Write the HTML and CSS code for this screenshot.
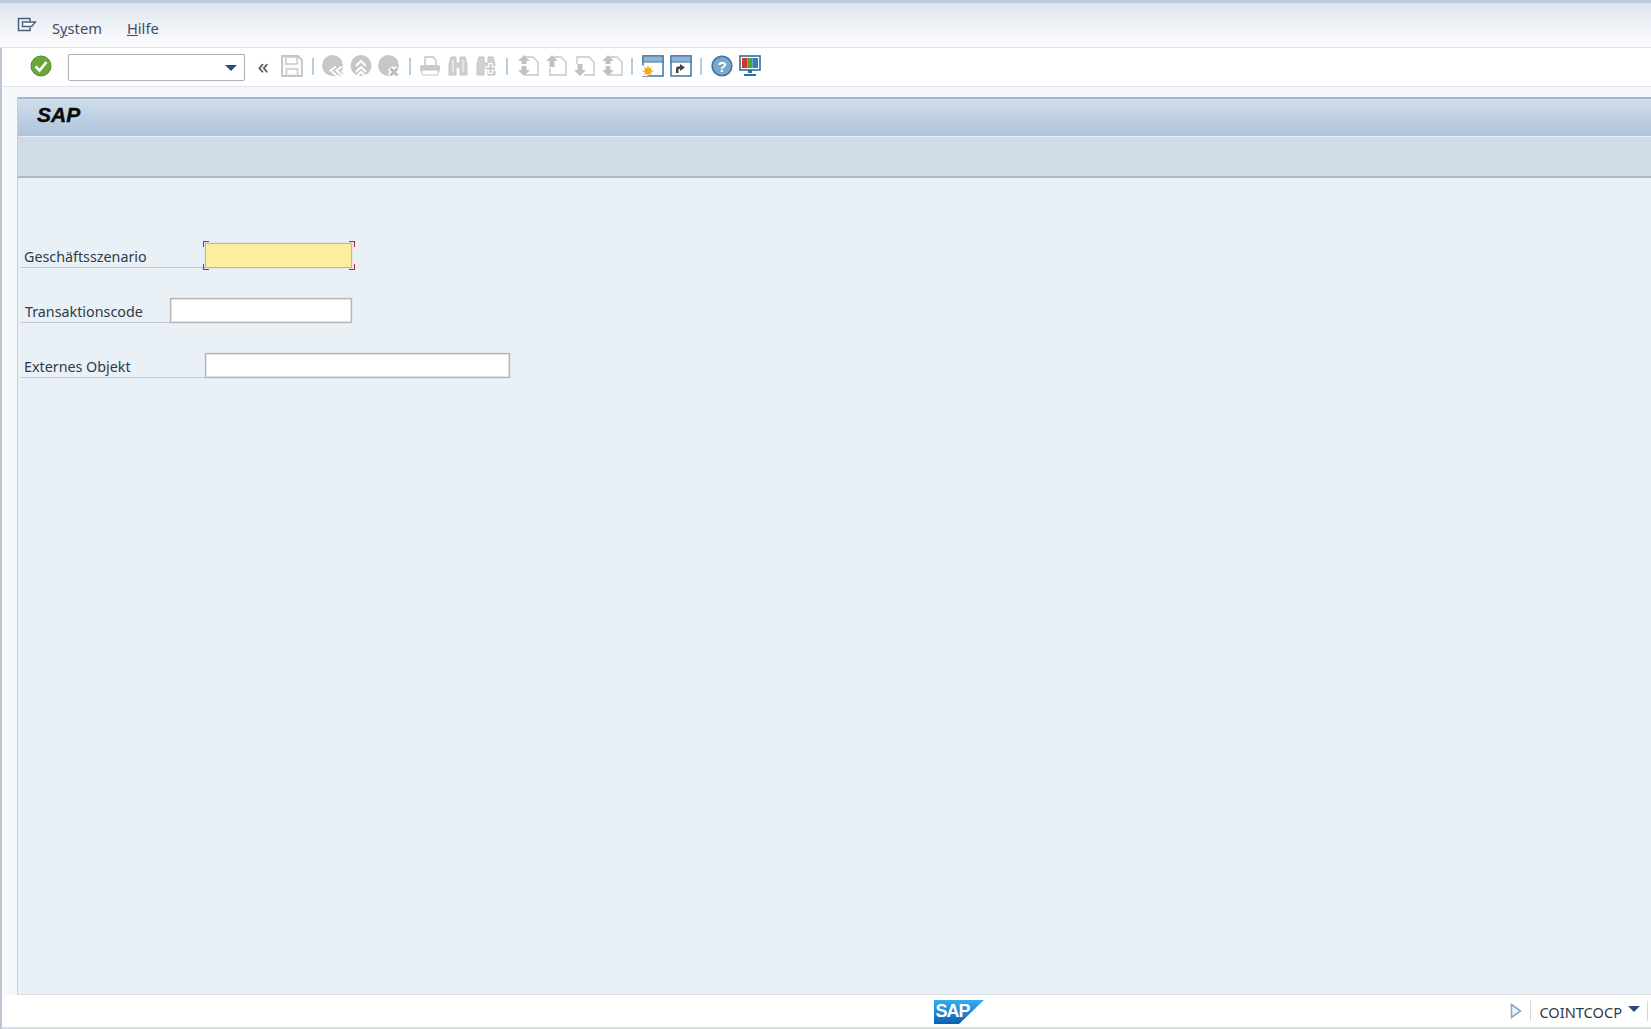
FILE: index.html
```html
<!DOCTYPE html>
<html lang="de">
  <head>
    <meta charset="UTF-8" />
    <title>SAP</title>
    <link rel="stylesheet" href="styles.css">
  </head>
  <body>
    <div class="window">
      <div class="menubar">
        <svg class="menu-icon" width="20" height="16" viewBox="0 0 20 16">
          <path d="M13 10.5V13.5H1.5V1.5H13V4.5" fill="none" stroke="#4a5f7d" stroke-width="1.5"/>
          <path d="M5.5 5H18.5L14.5 9.5H5.5Z" fill="#fff" stroke="#4a5f7d" stroke-width="1.4"/>
        </svg>
        <span class="menu-item">S<u>y</u>stem</span>
        <span class="menu-item"><u>H</u>ilfe</span>
      </div>

      <div class="toolbar">
        <svg class="check" width="22" height="22" viewBox="0 0 22 22">
          <circle cx="11" cy="11" r="10" fill="#6aa63c" stroke="#4f8a2c"/>
          <path d="M5.5 11.5L9.5 15.5L16.5 7" fill="none" stroke="#fff" stroke-width="2.6"/>
        </svg>
        <div class="combo"><span class="combo-arrow"></span></div>
        <span class="chevrons">«</span>

        <svg class="tool" viewBox="0 0 22 22"><path d="M1 1H17L21 5V21H1Z" fill="#fafafa" stroke="#c2c4c6" stroke-width="1.8"/><path d="M5 2H16V9H5Z M5.5 14H16.5V20.5H5.5Z" fill="#fff" stroke="#c6c8ca" stroke-width="1.4"/></svg>
        <span class="sep"></span>

        <svg class="tool" viewBox="0 0 22 22"><circle cx="10.5" cy="10.5" r="10.5" fill="#c6c7c8"/><path d="M20 11.5L14.5 15.5L20 20M14 11.5L8.5 15.5L14 20" fill="none" stroke="#c6c7c8" stroke-width="4"/><path d="M20 11.5L14.5 15.5L20 20M14 11.5L8.5 15.5L14 20" fill="none" stroke="#fff" stroke-width="2"/></svg>
        <svg class="tool" viewBox="0 0 22 22"><circle cx="11" cy="10.5" r="10.5" fill="#c6c7c8"/><path d="M6 11L11 6L16 11M6 17L11 12L16 17M6 22L11 17L16 22" fill="none" stroke="#fff" stroke-width="2"/></svg>
        <svg class="tool" viewBox="0 0 22 22"><circle cx="10.5" cy="10.5" r="10.5" fill="#c6c7c8"/><path d="M12 13L20 21M20 13L12 21" stroke="#fff" stroke-width="6"/><path d="M12.5 13.5L19.5 20.5M19.5 13.5L12.5 20.5" stroke="#b8babc" stroke-width="2.6"/></svg>
        <span class="sep"></span>

        <svg class="tool" viewBox="0 0 22 22"><path d="M6 10V2H14L17 5V10" fill="#fff" stroke="#c2c4c6" stroke-width="1.4"/><rect x="1" y="10" width="20" height="7" rx="2" fill="#c9cacb"/><rect x="3" y="15" width="16" height="5" rx="1" fill="#fff" stroke="#c2c4c6"/></svg>
        <svg class="tool" viewBox="0 0 22 22"><path d="M4 2H9V8H13V2H18L20 10V20H13V12H9V20H2V10Z" fill="#d0d1d2" stroke="#c0c2c4"/><path d="M6 5V17M16 5V17" stroke="#fff" stroke-width=".8"/></svg>
        <svg class="tool" viewBox="0 0 22 22"><path d="M4 2H9V8H13V2H18L20 10V20H13V12H9V20H2V10Z" fill="#d0d1d2" stroke="#c0c2c4"/><path d="M15.5 8V19M10 13.5H21" stroke="#fff" stroke-width="4.5"/><path d="M15.5 9V18M11 13.5H20" stroke="#c6c7c8" stroke-width="2"/></svg>
        <span class="sep"></span>

        <svg class="tool" viewBox="0 0 22 22"><path d="M8 2H16L21 7V20H8" fill="#fff" stroke="#c6c8ca" stroke-width="1.4"/><path d="M7 0L13 6H9.5V9H4.5V6H1ZM4.5 11H9.5V15H13L7 21L1 15H4.5Z" fill="#bfc1c3"/></svg>
        <svg class="tool" viewBox="0 0 22 22"><path d="M9 2H16L21 7V20H5V13" fill="#fff" stroke="#c6c8ca" stroke-width="1.4"/><path d="M7 0L13 6H9.5V12H4.5V6H1Z" fill="#bfc1c3"/></svg>
        <svg class="tool" viewBox="0 0 22 22"><path d="M4 9V2H16L21 7V20H11" fill="#fff" stroke="#c6c8ca" stroke-width="1.4"/><path d="M4.5 9H9.5V15H13L7 21L1 15H4.5Z" fill="#bfc1c3"/></svg>
        <svg class="tool" viewBox="0 0 22 22"><path d="M8 2H16L21 7V20H8" fill="#fff" stroke="#c6c8ca" stroke-width="1.4"/><path d="M7 0L13 6H9.5V9H4.5V6H1ZM4.5 11H9.5V15H13L7 21L1 15H4.5Z" fill="#bfc1c3"/></svg>
        <span class="sep"></span>

        <svg class="tool" viewBox="0 0 22 22"><rect x="1" y="1" width="20" height="20" fill="#fff" stroke="#3f76a5" stroke-width="1.5"/><rect x="1" y="1" width="20" height="6" fill="#8fb3d2" stroke="#3f76a5"/><path d="M0 10.5H6V21H0Z" fill="#fff"/><circle cx="6" cy="16" r="3.6" fill="#f4a91f"/><path d="M6 10.5V21.5M.5 16H11.5M2 12L10 20M10 12L2 20" stroke="#f4a91f"/></svg>
        <svg class="tool" viewBox="0 0 22 22"><rect x="1" y="1" width="20" height="20" fill="#fff" stroke="#3f76a5" stroke-width="1.5"/><rect x="1" y="1" width="20" height="6" fill="#8fb3d2" stroke="#3f76a5"/><path d="M6 18V14C6 12 7 11.5 9 11.5H10V9L15 12.5L10 16V14H9C8.5 14 8.5 14.2 8.5 15V18Z" fill="#444"/></svg>
        <span class="sep"></span>

        <svg class="tool" viewBox="0 0 22 22"><circle cx="11" cy="11" r="9.8" fill="#7aa8cc" stroke="#3f76a5" stroke-width="1.6"/><text class="help-mark" x="11" y="16.5">?</text></svg>
        <svg class="tool" viewBox="0 0 22 22"><rect x="1" y="1" width="20" height="14" fill="#fff" stroke="#2f6f9f" stroke-width="1.6"/><rect x="3" y="3" width="5.5" height="10" fill="#d8322c"/><rect x="8.5" y="3" width="5" height="10" fill="#4ca63c"/><rect x="13.5" y="3" width="5.5" height="10" fill="#2f7fc8"/><path d="M9 15H13V18H9ZM5 19H17V21H5Z" fill="#2f6f9f"/></svg>
      </div>
      <div class="toolbar-gap"></div>

      <div class="screen">
        <div class="title-bar">SAP</div>
        <div class="app-toolbar"></div>
        <div class="form">
          <div class="row">
            <label class="field-label label-focus">Geschäftsszenario</label>
            <div class="field field-focus">
              <i class="corner tl"></i><i class="corner tr"></i><i class="corner bl"></i><i class="corner br"></i>
            </div>
          </div>
          <div class="row">
            <label class="field-label label-code">Transaktionscode</label>
            <div class="field field-code"></div>
          </div>
          <div class="row">
            <label class="field-label label-object">Externes Objekt</label>
            <div class="field field-object"></div>
          </div>
        </div>
      </div>

      <div class="statusbar">
        <svg class="sap-logo" width="50" height="24" viewBox="0 0 50 24">
          <defs>
            <linearGradient id="logoBlue" x1="0" y1="0" x2="0" y2="1">
              <stop offset="0" stop-color="#35aef0"/>
              <stop offset="1" stop-color="#0b5fb3"/>
            </linearGradient>
          </defs>
          <path d="M0 0H50L25 24H0Z" fill="url(#logoBlue)"/>
          <text class="logo-text" x="1.5" y="17">SAP</text>
        </svg>
        <div class="status-right">
          <svg class="status-play" width="12" height="16" viewBox="0 0 12 16">
            <path d="M1.5 1.5L10.5 8L1.5 14.5Z" fill="#eef3f8" stroke="#8fa9c4" stroke-width="1.6"/>
          </svg>
          <span class="status-sep"></span>
          <span class="system-name">COINTCOCP</span>
          <span class="system-arrow"></span>
          <span class="status-sep"></span>
        </div>
      </div>
    </div>
  </body>
</html>
```

FILE: styles.css
```css
html,
body {
  margin: 0;
  height: 100%;
  overflow: hidden;
}

body {
  font-family: "Noto Sans", "Liberation Sans", sans-serif;
  font-size: 14.3px;
  color: #2f3a4a;
  background: #f6f8fb;
}

.window {
  display: flex;
  flex-direction: column;
  height: 1029px;
  border-left: 2px solid #bcc6d4;
  box-sizing: border-box;
}

.menubar {
  display: flex;
  align-items: center;
  height: 48px;
  flex: none;
  box-sizing: border-box;
  padding: 6px 0 0 15px;
  margin-left: -2px;
  border-top: 3px solid #bccadb;
  border-bottom: 1px solid #dfe3e8;
  background: linear-gradient(#dde4ee, #eef2f7 50%, #fdfdfe);
}

.menu-icon {
  margin: -7px 15px 0 2px;
}

.menu-item {
  margin-right: 25px;
  color: #3f4d63;
  font-size: 14.7px;
}

.toolbar {
  display: flex;
  align-items: center;
  height: 39px;
  flex: none;
  padding-left: 28px;
  background: #fff;
  border-bottom: 1px solid #dfe3e8;
  box-sizing: border-box;
}

.check {
  margin: -2px 16px 0 0;
}

.combo {
  position: relative;
  width: 177px;
  height: 27px;
  box-sizing: border-box;
  border: 1px solid #b1b3b5;
  border-radius: 2px;
  box-shadow: 0 0 1px #b1b3b5;
  background: #fff;
}

.combo-arrow {
  position: absolute;
  right: 7px;
  top: 10px;
  border-top: 6px solid #2c4a80;
  border-left: 6px solid transparent;
  border-right: 6px solid transparent;
}

.chevrons {
  width: 36px;
  margin: -4px -3px 0 0;
  text-align: center;
  font-size: 22px;
  line-height: 27px;
  color: #555;
}

.tool {
  width: 22px;
  height: 22px;
  margin: -2px 3px 0;
  flex: none;
}

.sep {
  width: 2px;
  height: 17px;
  margin: -2px 5.6px 0;
  background: #b7cde0;
  flex: none;
}

.help-mark {
  font-family: "Liberation Sans", sans-serif;
  font-size: 15px;
  font-weight: bold;
  fill: #fff;
  text-anchor: middle;
}

.toolbar-gap {
  height: 10px;
  flex: none;
}

.screen {
  flex: 1;
  margin-left: 15px;
  background: #e9f0f6;
  display: flex;
  flex-direction: column;
  border-left: 1px solid #c4ccd6;
  border-bottom: 1px solid #d9dee5;
}

.title-bar {
  height: 39px;
  flex: none;
  box-sizing: border-box;
  padding: 4px 0 0 19px;
  border-top: 2px solid #a3b6c9;
  background: linear-gradient(#d0deeb, #aec3da);
  font-family: "Liberation Sans", sans-serif;
  font-size: 21px;
  font-weight: bold;
  font-style: italic;
  color: #0a0a0a;
  -webkit-text-stroke: 0.4px #0a0a0a;
}

.app-toolbar {
  height: 42px;
  flex: none;
  box-sizing: border-box;
  background: #cfdce7;
  border-top: 1px solid #e7eef5;
  border-bottom: 2px solid #a9b9c7;
}

.form {
  padding-top: 65px;
  padding-left: 3px;
}

.row {
  display: flex;
  align-items: flex-end;
  height: 25px;
  margin-bottom: 30px;
}

.field-label {
  box-sizing: border-box;
  height: 25px;
  padding: 4px 0 0 3px;
  line-height: 20px;
  border-bottom: 1px solid #c3c7cc;
  white-space: nowrap;
  color: #2f3a4a;
}

.label-focus,
.label-object {
  width: 184px;
}

.label-code {
  width: 149px;
  padding-left: 4px;
}

.field {
  position: relative;
  height: 25px;
  box-sizing: border-box;
  background: #fff;
  border: 1px solid #b5b7b9;
  box-shadow: inset 0 0 0 1px #e0e2e4, 0 0 1px #b5b7b9;
}

.field-focus {
  width: 147px;
  background: #ffed9e;
  box-shadow: 0 0 1px #b5b7b9;
}

.field-code {
  width: 182px;
}

.field-object {
  width: 305px;
}

.corner {
  position: absolute;
  width: 5px;
  height: 5px;
  border: 0 solid #c0222f;
}

.tl { top: -3px; left: -3px; border-width: 1px 0 0 1px; }
.tr { top: -3px; right: -4px; border-width: 1px 1px 0 0; }
.bl { bottom: -3px; left: -3px; border-width: 0 0 1px 1px; }
.br { bottom: -3px; right: -4px; border-width: 0 1px 1px 0; }

.statusbar {
  position: relative;
  display: flex;
  align-items: center;
  justify-content: flex-end;
  height: 34px;
  flex: none;
  background: #fff;
  border-bottom: 2px solid #d8dce2;
  box-sizing: border-box;
}

.sap-logo {
  position: absolute;
  left: 932px;
  top: 5px;
}

.logo-text {
  font-family: "Liberation Sans", sans-serif;
  font-size: 18px;
  font-weight: bold;
  fill: #fff;
  letter-spacing: -1px;
}

.status-right {
  display: flex;
  align-items: center;
  padding-right: 3px;
}

.status-play {
  margin-right: 8px;
}

.status-sep {
  width: 1px;
  height: 20px;
  background: #d4d8dd;
}

.system-name {
  margin: 2px 0 0 8px;
  font-size: 14.6px;
  color: #2f3a4a;
}

.system-arrow {
  margin: -4px 7px 0 6px;
  border-top: 6px solid #2c4a80;
  border-left: 6px solid transparent;
  border-right: 6px solid transparent;
}
```
